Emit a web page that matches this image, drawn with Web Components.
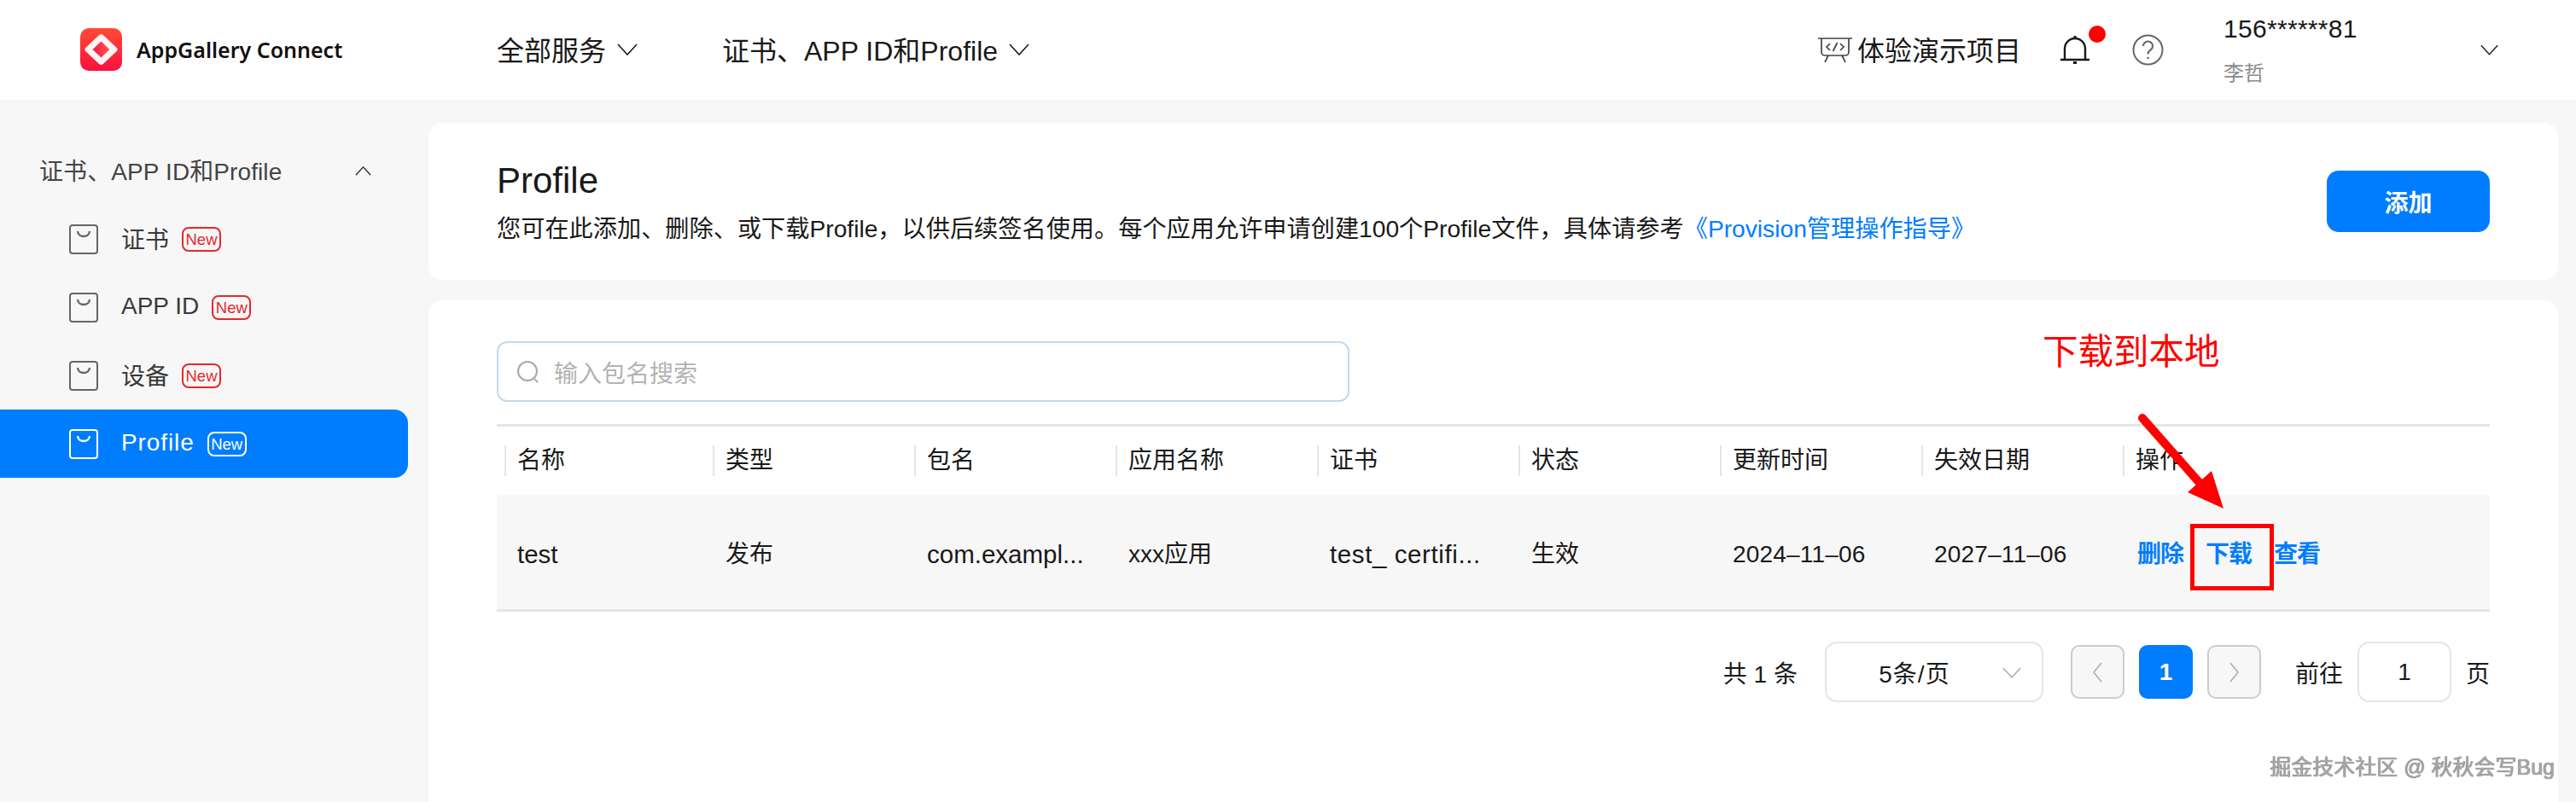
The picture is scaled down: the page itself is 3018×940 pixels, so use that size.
<!DOCTYPE html>
<html lang="zh">
<head>
<meta charset="utf-8">
<title>Profile</title>
<style>
  html, body { margin: 0; padding: 0; background: #f7f7f7; }
  body { width: 3018px; height: 940px; overflow: hidden; position: relative; font-family: "Liberation Sans", "Noto Sans CJK SC", sans-serif; color: #191919; }
  .page { display: flex; align-items: flex-start; height: 821px; }
</style>
</head>
<body>
<app-header></app-header>
<div class="page">
  <side-nav title-text="证书、APP ID和Profile">
    <nav-item>证书</nav-item>
    <nav-item>APP ID</nav-item>
    <nav-item>设备</nav-item>
    <nav-item active>Profile</nav-item>
  </side-nav>
  <main-column>
    <intro-card></intro-card>
    <table-card></table-card>
  </main-column>
</div>
<note-layer></note-layer>

<script>
const FONT = '"Liberation Sans", "Noto Sans CJK SC", sans-serif';
const CHEVRON = (w, h, color) => `<svg width="${w}" height="${h}" viewBox="0 0 24 14" fill="none" stroke="${color}" stroke-width="1.6"><path d="M1 1l11 12L23 1"/></svg>`;

class AppHeader extends HTMLElement {
  connectedCallback() {
    this.attachShadow({ mode: 'open' });
    this.shadowRoot.innerHTML = `
      <style>
        :host { display: flex; align-items: center; box-sizing: content-box; height: 116px; padding-bottom: 2px; background: #fff; border-bottom: 1px solid #eee; font-family: ${FONT}; color: #191919; position: relative; }
        .logo { display: flex; align-items: center; gap: 17px; margin-left: 94px; width: 488px; flex: none; font: 600 25px "Noto Sans", sans-serif; color: #111; }
        .logo svg { flex: none; }
        .logo span { margin-top: -1px; }
        .menu { display: flex; align-items: center; gap: 13px; font-size: 32px; }
        .menu span, .demo span { margin-top: -2px; }
        .menu.second { margin-left: 99px; }
        .right { display: flex; align-items: center; margin-left: auto; }
        .demo { display: flex; align-items: center; gap: 6px; font-size: 32px; margin-right: 45px; }
        .bell { position: relative; width: 36px; height: 36px; margin-right: 49px; }
        .dot { position: absolute; left: 34px; top: -10px; width: 20px; height: 20px; border-radius: 50%; background: #f00; }
        .help { margin-right: 70px; display: block; }
        .user { width: 301px; display: flex; flex-direction: column; height: 118px; justify-content: center; gap: 20px; margin-top: 2px; }
        .phone { font-size: 30px; line-height: 34px; letter-spacing: .3px; }
        .name { font-size: 24px; line-height: 30px; color: #8a8a8a; }
        .end { margin-right: 91px; display: block; }
      </style>
      <div class="logo">
        <svg width="49" height="50" viewBox="0 0 49 50">
          <defs>
            <linearGradient id="lg" x1="0" y1="0" x2="0" y2="1"><stop offset="0" stop-color="#ff4b36"/><stop offset="1" stop-color="#f8113e"/></linearGradient>
            <linearGradient id="lh" x1="0" y1="0" x2="1" y2="0"><stop offset="0" stop-color="#f9143e"/><stop offset="1" stop-color="#ff5a58"/></linearGradient>
          </defs>
          <rect width="49" height="50" rx="10" fill="url(#lg)"/>
          <path d="M24.500 7a3 3 0 0 1 2.300 1L42.500 22.700a3 3 0 0 1 0 4.600L26.800 42a3 3 0 0 1-4.600 0L6.500 27.300a3 3 0 0 1 0-4.600L22.200 8a3 3 0 0 1 2.300-1z" fill="#fff" opacity=".95"/>
          <path d="M24.500 15.500L34.500 25 24.500 34.500 14.500 25z" fill="url(#lh)"/>
        </svg>
        <span>AppGallery Connect</span>
      </div>
      <div class="menu"><span>全部服务</span>${CHEVRON(24, 14, '#191919')}</div>
      <div class="menu second"><span>证书、APP ID和Profile</span>${CHEVRON(24, 14, '#191919')}</div>
      <div class="right">
        <div class="demo">
          <svg width="40" height="29" viewBox="0 0 40 29" fill="none" stroke="#444" stroke-width="1.700">
            <path d="M0 1h40M4 1v16a4 4 0 0 0 4 4h24a4 4 0 0 0 4-4V1M12 21l-4 8M28 21l4 8"/>
            <path d="M14 7l-4 4 4 4M26 7l4 4-4 4M22.500 6l-5 10"/>
          </svg>
          <span>体验演示项目</span>
        </div>
        <div class="bell">
          <svg width="36" height="36" viewBox="0 0 36 36" fill="none" stroke="#191919" stroke-width="2.400">
            <path d="M1 30h34M6 30V17a12 12 0 0 1 24 0v13"/>
            <path d="M18 5V2M16 33.500h4" stroke-width="3"/>
          </svg>
          <span class="dot"></span>
        </div>
        <svg class="help" width="37" height="37" viewBox="0 0 37 37" fill="none" stroke="#666" stroke-width="2">
          <circle cx="18.500" cy="18.500" r="17"/>
          <path d="M13 14a5.500 5.500 0 1 1 8.500 4.600c-2 1.300-3 2.300-3 4.900"/>
          <circle cx="18.500" cy="28" r="1.300" fill="#666" stroke="none"/>
        </svg>
        <div class="user"><span class="phone">156******81</span><span class="name">李哲</span></div>
        <svg class="end" width="21" height="13" viewBox="0 0 24 14" fill="none" stroke="#191919" stroke-width="1.600"><path d="M1 1l11 12L23 1"/></svg>
      </div>
    `;
  }
}
customElements.define('app-header', AppHeader);

class SideNav extends HTMLElement {
  connectedCallback() {
    this.attachShadow({ mode: 'open' });
    this.shadowRoot.innerHTML = `
      <style>
        :host { display: block; width: 478px; flex: none; padding-top: 41px; font-family: ${FONT}; }
        .group { display: flex; align-items: center; justify-content: space-between; height: 80px; padding: 0 43px 0 46px; font-size: 28px; color: #444; }
        .group span { margin-top: -2px; letter-spacing: .1px; }
      </style>
      <div class="group">
        <span>${this.getAttribute('title-text')}</span>
        <svg width="19" height="11" viewBox="0 0 24 14" fill="none" stroke="#333" stroke-width="1.800"><path d="M1 13L12 1l11 12"/></svg>
      </div>
      <slot></slot>
    `;
  }
}
customElements.define('side-nav', SideNav);

class NavItem extends HTMLElement {
  connectedCallback() {
    this.attachShadow({ mode: 'open' });
    this.shadowRoot.innerHTML = `
      <style>
        :host { display: flex; align-items: center; height: 80px; padding-left: 81px; font-size: 28px; color: #3a3a3a; font-family: ${FONT}; --line: #666; --tag: #e5282b; }
        :host([active]) { background: #007dff; color: #fff; border-radius: 0 16px 16px 0; --line: #fff; --tag: #fff; }
        svg { flex: none; margin-right: 27px; }
        .label { margin-top: -2px; }
        :host([active]) .label { letter-spacing: .9px; }
        .tag { margin-left: 15px; width: 42px; height: 25px; border: 2px solid var(--tag); border-radius: 8px; color: var(--tag); font-size: 18.500px; line-height: 25px; text-align: center; }
      </style>
      <svg width="34" height="35" viewBox="0 0 34 35" fill="none" stroke="var(--line)" stroke-width="2">
        <rect x="1" y="1" width="32" height="33" rx="3"/>
        <path d="M10 8c.5 8 13.500 8 14 0" stroke-width="2.400"/>
      </svg>
      <span class="label"><slot></slot></span>
      <span class="tag">New</span>
    `;
  }
}
customElements.define('nav-item', NavItem);

class MainColumn extends HTMLElement {
  connectedCallback() {
    this.attachShadow({ mode: 'open' });
    this.shadowRoot.innerHTML = `
      <style>
        :host { display: flex; flex-direction: column; gap: 24px; width: 2495px; margin-left: 24px; padding-top: 25px; }
      </style>
      <slot></slot>
    `;
  }
}
customElements.define('main-column', MainColumn);

class IntroCard extends HTMLElement {
  connectedCallback() {
    this.attachShadow({ mode: 'open' });
    this.shadowRoot.innerHTML = `
      <style>
        :host { display: flex; align-items: center; justify-content: space-between; height: 184px; padding: 0 80px; background: #fff; border-radius: 16px; font-family: ${FONT}; color: #191919; }
        h1 { margin: 0; font-size: 42px; font-weight: 400; line-height: 56px; }
        p { margin: 8px 0 0; font-size: 28.200px; line-height: 40px; }
        a { color: #007dff; text-decoration: none; }
        button { width: 191px; height: 72px; border: 0; border-radius: 14px; background: #007dff; color: #fff; font: 700 28px ${FONT}; }
      </style>
      <div>
        <h1>Profile</h1>
        <p>您可在此添加、删除、或下载Profile，以供后续签名使用。每个应用允许申请创建100个Profile文件，具体请参考<a>《Provision管理操作指导》</a></p>
      </div>
      <button>添加</button>
    `;
  }
}
customElements.define('intro-card', IntroCard);

class TableCard extends HTMLElement {
  connectedCallback() {
    const heads = ['名称', '类型', '包名', '应用名称', '证书', '状态', '更新时间', '失效日期', '操作'];
    const cells = [['test', 'wide'], ['发布'], ['com.exampl...', 'wide'], ['xxx应用'], ['test_ certifi...', 'wide spaced'], ['生效'], ['2024–11–06', 'date'], ['2027–11–06', 'date']];
    this.attachShadow({ mode: 'open' });
    this.shadowRoot.innerHTML = `
      <style>
        :host { display: block; box-sizing: border-box; height: 588px; padding: 48px 80px 0; background: #fff; border-radius: 16px 16px 0 0; font-family: ${FONT}; font-size: 28px; color: #191919; }
        .search { display: flex; align-items: center; gap: 17px; box-sizing: border-box; width: 999px; height: 71px; padding-left: 22px; border: 2px solid #c4d9ea; border-radius: 12px; color: #b3b3b3; }
        .grid { display: grid; grid-template-columns: 244px repeat(7, 236px) 1fr; }
        .head { margin-top: 26px; height: 80px; border-top: 3px solid #e5e5e5; align-items: center; }
        .head span { position: relative; padding-left: 24px; line-height: 40px; }
        .head span::before { content: ""; position: absolute; left: 9px; top: 2px; bottom: 2px; width: 2px; background: #e5e5e5; }
        .row { box-sizing: border-box; height: 137px; padding-top: 5px; background: #f7f7f7; border-bottom: 3px solid #e5e5e5; align-items: center; }
        .row span { padding-left: 24px; line-height: 40px; }
        .row span.wide { font-size: 29.500px; }
        .row span.spaced { letter-spacing: .6px; }
        .row span.date { letter-spacing: .2px; }
        .ops { display: flex; gap: 26px; padding-left: 26px; color: #007dff; font-weight: 700; line-height: 40px; }
        .ops a { width: 54px; white-space: nowrap; letter-spacing: -1px; }
        .pager { display: flex; align-items: center; justify-content: flex-end; margin-top: 35px; height: 71px; }
        .box { box-sizing: border-box; height: 71px; border: 2px solid #e5e5e5; border-radius: 14px; display: flex; align-items: center; justify-content: center; }
        .select { width: 256px; margin-left: 32px; position: relative; padding-right: 46px; letter-spacing: 1px; }
        .select svg { position: absolute; right: 24px; top: 28px; }
        .go { box-sizing: border-box; width: 63px; height: 63px; margin-left: 17px; background: #f7f7f7; border: 2px solid #ccc; border-radius: 10px; display: flex; align-items: center; justify-content: center; }
        .go.first { margin-left: 32px; }
        .cur { background: #007dff; border: 0; color: #fff; font-weight: 700; }
        .input { width: 110px; margin: 0 17px 0 17px; }
        .jump { margin-left: 40px; }
      </style>
      <div class="search">
        <svg width="26" height="28" viewBox="0 0 26 28" fill="none" stroke="#a8a8a8" stroke-width="2"><circle cx="12" cy="13" r="11"/><path d="M20 22l4 4"/></svg>
        <span>输入包名搜索</span>
      </div>
      <div class="grid head">${heads.map(h => `<span>${h}</span>`).join('')}</div>
      <div class="grid row">
        ${cells.map(c => `<span${c[1] ? ` class="${c[1]}"` : ''}>${c[0]}</span>`).join('')}
        <div class="ops"><a>删除</a><a>下载</a><a>查看</a></div>
      </div>
      <div class="pager">
        <span>共 1 条</span>
        <div class="box select"><span>5条/页</span><svg width="22" height="13" viewBox="0 0 24 14" fill="none" stroke="#aaa" stroke-width="1.600"><path d="M1 1l11 12L23 1"/></svg></div>
        <div class="go first"><svg width="11" height="24" viewBox="0 0 11 24" fill="none" stroke="#aaa" stroke-width="1.500"><path d="M10 1L1 12l9 11"/></svg></div>
        <div class="go cur">1</div>
        <div class="go"><svg width="11" height="24" viewBox="0 0 11 24" fill="none" stroke="#aaa" stroke-width="1.500"><path d="M1 1l9 11-9 11"/></svg></div>
        <span class="jump">前往</span>
        <div class="box input">1</div>
        <span>页</span>
      </div>
    `;
  }
}
customElements.define('table-card', TableCard);

// red annotation and watermark lying over the screenshot
class NoteLayer extends HTMLElement {
  connectedCallback() {
    this.attachShadow({ mode: 'open' });
    this.shadowRoot.innerHTML = `
      <style>
        :host { position: absolute; inset: 0; pointer-events: none; font-family: ${FONT}; }
        .say { position: absolute; left: 2393px; top: 389px; font-size: 41.500px; line-height: 48px; color: #f00; }
        .frame { position: absolute; left: 2566px; top: 614px; width: 88px; height: 68px; border: 5px solid #f00; }
        svg { position: absolute; left: 0; top: 0; }
        .mark { position: absolute; right: 25px; top: 884px; font-size: 25px; line-height: 30px; color: #a8a8a8; text-shadow: 0 0 1px #333; }
      </style>
      <div class="say">下载到本地</div>
      <svg width="3018" height="940" fill="#f00">
        <path d="M2510 490L2585 575" stroke="#f00" stroke-width="10" stroke-linecap="round"/>
        <path d="M2605 596L2591 552L2563 577z"/>
      </svg>
      <div class="frame"></div>
      <div class="mark">掘金技术社区 @ 秋秋会写Bug</div>
    `;
  }
}
customElements.define('note-layer', NoteLayer);
</script>
</body>
</html>
